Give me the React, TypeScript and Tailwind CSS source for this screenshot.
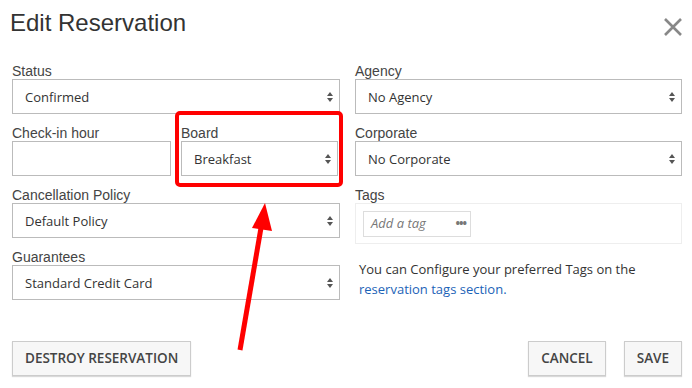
import { ReactNode } from 'react';

const labelFont = { fontFamily: '"Liberation Sans", Arial, sans-serif' };
const bodyFont = { fontFamily: '"Open Sans", "Liberation Sans", sans-serif' };

function Arrows() {
  return (
    <svg width="8" height="12" viewBox="0 0 8 12" className="shrink-0">
      <path d="M4 1 L7 5 L1 5 Z" fill="#555" />
      <path d="M4 11 L7 7 L1 7 Z" fill="#555" />
    </svg>
  );
}

function Label({ children }: { children: ReactNode }) {
  return (
    <div className="h-[15px] text-[14px] leading-[15px] text-[#444]" style={labelFont}>
      {children}
    </div>
  );
}

function Select({ value }: { value: string }) {
  return (
    <div
      className="h-[35px] border border-[#bbb] flex items-center justify-between pl-[12px] pr-[5px] text-[13px] text-[#333]"
      style={bodyFont}
    >
      <span className="pt-[3px]">{value}</span>
      <Arrows />
    </div>
  );
}

function Field({ label, children }: { label: string; children: ReactNode }) {
  return (
    <div className="flex flex-col">
      <Label>{label}</Label>
      {children}
    </div>
  );
}

function Btn({ children }: { children: ReactNode }) {
  return (
    <button
      className="h-[35px] px-[12px] bg-[#f7f7f7] border border-[#ccc] shadow-[0_1px_1px_rgba(0,0,0,0.15)] text-[13.5px] font-semibold text-[#444]"
      style={bodyFont}
    >
      {children}
    </button>
  );
}

export default function App() {
  return (
    <div className="relative w-[692px] h-[388px] bg-white overflow-hidden">
      <div className="flex items-start justify-between pl-[10px] pr-[9px] pt-[7px] h-[64px]">
        <h1 className="text-[24px] leading-[32px] text-[#333]" style={labelFont}>
          Edit Reservation
        </h1>
        <svg width="20" height="20" viewBox="0 0 20 20" className="mt-[10px]">
          <path d="M2 2 L18 18 M18 2 L2 18" stroke="#888" strokeWidth="2.6" />
        </svg>
      </div>

      <div className="grid grid-cols-[328px_327px] gap-x-[15px] pl-[12px]">
        <div className="flex flex-col gap-y-[12px]">
          <Field label="Status">
            <Select value="Confirmed" />
          </Field>
          <div className="grid grid-cols-[159px_157px] gap-x-[10px]">
            <Field label="Check-in hour">
              <div className="h-[35px] border border-[#bbb]" />
            </Field>
            <Field label="Board">
              <Select value="Breakfast" />
            </Field>
          </div>
          <Field label="Cancellation Policy">
            <Select value="Default Policy" />
          </Field>
          <Field label="Guarantees">
            <Select value="Standard Credit Card" />
          </Field>
        </div>

        <div className="flex flex-col gap-y-[12px]">
          <Field label="Agency">
            <Select value="No Agency" />
          </Field>
          <Field label="Corporate">
            <Select value="No Corporate" />
          </Field>
          <Field label="Tags">
            <div className="h-[41px] border border-[#eee] pl-[7px] pt-[7px]">
              <div
                className="w-[108px] h-[26px] border border-[#ddd] flex items-center justify-between pl-[7px] pr-[4px] text-[13px] italic text-[#777]"
                style={bodyFont}
              >
                <span>Add a tag</span>
                <span className="text-[#777] text-[12px] tracking-[-1px] not-italic font-bold">•••</span>
              </div>
            </div>
          </Field>
          <p className="pl-[4px] pt-[3px] text-[13px] leading-[20px] text-[#333]" style={bodyFont}>
            You can Configure your preferred Tags on the
            <br />
            <span className="text-[#1c63b7]">reservation tags section.</span>
          </p>
        </div>
      </div>

      <div className="flex items-center justify-between pl-[12px] pr-[10px] mt-[41px]">
        <Btn>DESTROY RESERVATION</Btn>
        <div className="flex gap-x-[18px]">
          <Btn>CANCEL</Btn>
          <Btn>SAVE</Btn>
        </div>
      </div>

      <svg className="absolute left-0 top-0 pointer-events-none" width="692" height="388">
        <rect x="177" y="113" width="164" height="72" rx="3" fill="none" stroke="#ff0000" strokeWidth="4" />
        <line x1="240" y1="350" x2="262" y2="222" stroke="#ff0000" strokeWidth="5" />
        <polygon points="265,203 252,228 272,231" fill="#ff0000" />
      </svg>
    </div>
  );
}
